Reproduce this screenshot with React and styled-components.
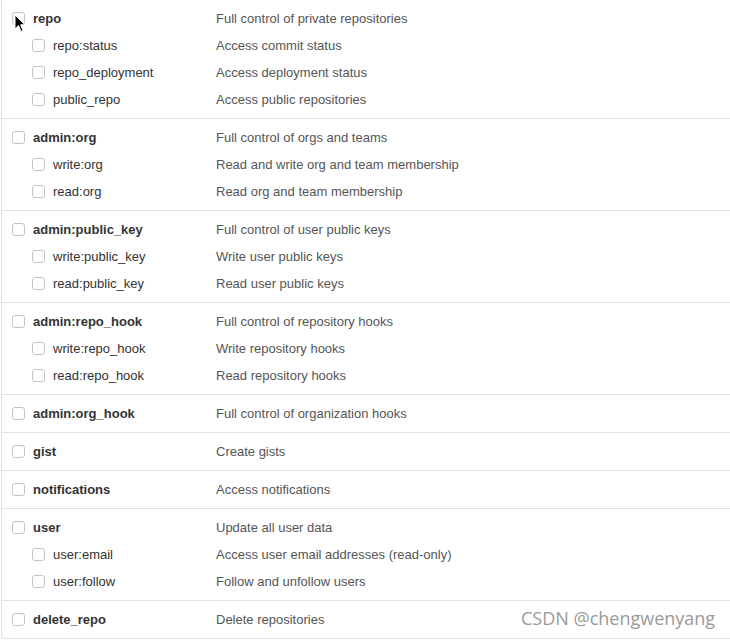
import React from 'react'
import styled, { createGlobalStyle } from 'styled-components'

const GlobalStyle = createGlobalStyle`
  body {
    margin: 0;
    background: #fff;
    overflow: hidden;
    font-family: "Liberation Sans", Arial, sans-serif;
  }
`

const Page = styled.div`
  position: relative;
  width: 730px;
  height: 641px;
  overflow: hidden;
`

const List = styled.div`
  margin: -1px 0 0 1px;
  width: 760px;
  border: 1px solid #e1e1e1;
  border-radius: 3px;
`

const Group = styled.div`
  padding: 5px 0;
  border-top: ${p => (p.first ? 'none' : '1px solid #e1e1e1')};
`

const Row = styled.div`
  display: flex;
  align-items: center;
  height: 27px;
  font-size: 13px;
`

const LabelCell = styled.label`
  display: flex;
  align-items: center;
  width: 214px;
  flex-shrink: 0;
  box-sizing: border-box;
  padding-left: ${p => (p.sub ? 30 : 10)}px;
  color: #333;
  font-weight: ${p => (p.sub ? 400 : 700)};
`

const Box = styled.span`
  display: inline-block;
  width: 11px;
  height: 11px;
  border: 1px solid #c4c4c4;
  border-radius: 3px;
  background: #fff;
  margin-right: 8px;
`

const Desc = styled.span`
  color: #555;
`

const Watermark = styled.div`
  position: absolute;
  left: 521px;
  top: 606px;
  font-family: "Open Sans", "Noto Sans", sans-serif;
  font-size: 18px;
  color: #9a9a9a;
  letter-spacing: 0;
`

const Cursor = styled.svg`
  position: absolute;
  left: 14px;
  top: 14px;
`

const groups = [
  [
    ['repo', 'Full control of private repositories'],
    ['repo:status', 'Access commit status'],
    ['repo_deployment', 'Access deployment status'],
    ['public_repo', 'Access public repositories'],
  ],
  [
    ['admin:org', 'Full control of orgs and teams'],
    ['write:org', 'Read and write org and team membership'],
    ['read:org', 'Read org and team membership'],
  ],
  [
    ['admin:public_key', 'Full control of user public keys'],
    ['write:public_key', 'Write user public keys'],
    ['read:public_key', 'Read user public keys'],
  ],
  [
    ['admin:repo_hook', 'Full control of repository hooks'],
    ['write:repo_hook', 'Write repository hooks'],
    ['read:repo_hook', 'Read repository hooks'],
  ],
  [['admin:org_hook', 'Full control of organization hooks']],
  [['gist', 'Create gists']],
  [['notifications', 'Access notifications']],
  [
    ['user', 'Update all user data'],
    ['user:email', 'Access user email addresses (read-only)'],
    ['user:follow', 'Follow and unfollow users'],
  ],
  [['delete_repo', 'Delete repositories']],
]

const App = () => (
  <Page>
    <GlobalStyle />
    <List>
      {groups.map((rows, gi) => (
        <Group key={gi} first={gi === 0}>
          {rows.map(([name, desc], ri) => (
            <Row key={name}>
              <LabelCell sub={ri > 0}>
                <Box />
                {name}
              </LabelCell>
              <Desc>{desc}</Desc>
            </Row>
          ))}
        </Group>
      ))}
    </List>
    <Watermark>CSDN @chengwenyang</Watermark>
    <Cursor width="12" height="19" viewBox="0 0 12 19">
      <path d="M1 1 L1 15 L4.5 11.5 L7 17.5 L9 16.5 L6.6 10.8 L11 10.8 Z" fill="#000" stroke="#fff" strokeWidth="1" />
    </Cursor>
  </Page>
)

export default App
